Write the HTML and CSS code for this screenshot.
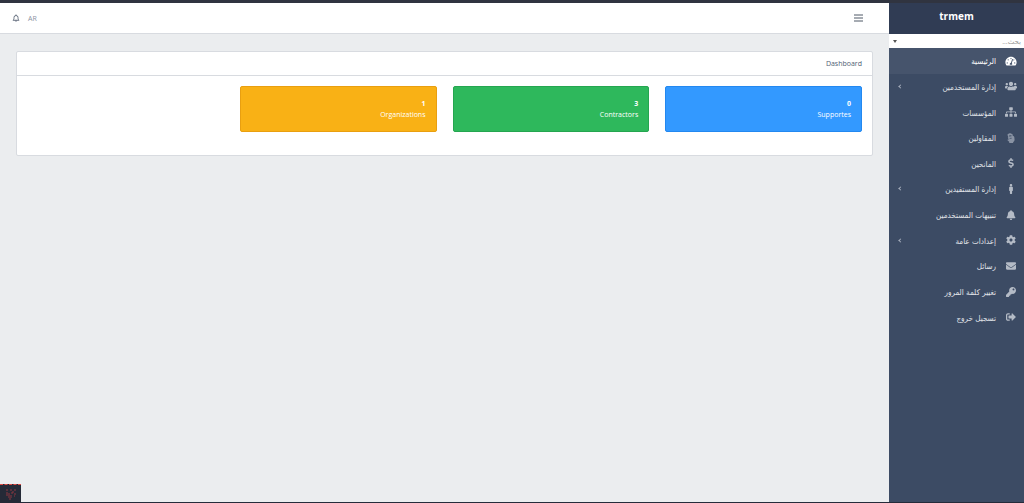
FILE: index.html
```html
<!DOCTYPE html>
<html lang="ar" dir="rtl">
<head>
<meta charset="utf-8">
<title>trmem</title>
<link rel="stylesheet" href="styles.css">
</head>
<body>
<div class="shell">
  <aside class="sidebar">
    <div class="brand">trmem</div>
    <div class="search">
      <select class="search-select" aria-label="بحث"><option>بحث...</option></select>
    </div>
    <nav class="menu">
      <a class="item active" href="#"><svg class="icon" viewBox="0 0 576 512"><path fill-rule="evenodd" d="M288 32C129 32 0 161 0 320c0 53 14 102 39 145 6 10 16 15 27 15h444c11 0 21-5 27-15 25-43 39-92 39-145C576 161 447 32 288 32zm0 64c18 0 32 14 32 32s-14 32-32 32-32-14-32-32 14-32 32-32zM96 384c-18 0-32-14-32-32s14-32 32-32 32 14 32 32-14 32-32 32zm48-160c-18 0-32-14-32-32s14-32 32-32 32 14 32 32-14 32-32 32zm247-44l-61 184c22 18 29 44 15 84H231c-14-41-6-75 30-94 8-4 16-6 24-6l61-184c9-25 54-10 45 16zm41 44c-10 0-19-5-25-12l16-47c3-1 6-5 9-5 18 0 32 14 32 32s-14 32-32 32zm48 160c-18 0-32-14-32-32s14-32 32-32 32 14 32 32-14 32-32 32z"/></svg><span class="label">الرئيسية</span></a>
      <a class="item" href="#"><svg class="icon" viewBox="0 0 640 512"><path d="M96 224c35 0 64-29 64-64s-29-64-64-64-64 29-64 64 29 64 64 64zm448 0c35 0 64-29 64-64s-29-64-64-64-64 29-64 64 29 64 64 64zm32 32h-64c-18 0-34 7-45 19 40 22 69 62 75 109h66c18 0 32-14 32-32v-32c0-35-29-64-64-64zm-256 0c62 0 112-50 112-112S382 32 320 32 208 82 208 144s50 112 112 112zm77 32h-8c-42 20-92 21-138 0h-8c-64 0-115 51-115 115v29c0 27 21 48 48 48h352c27 0 48-21 48-48v-29c0-64-51-115-115-115h-64zm-224-13c-11-12-27-19-45-19H64c-35 0-64 29-64 64v32c0 18 14 32 32 32h66c6-47 35-87 75-109z"/></svg><span class="label">إدارة المستخدمين</span><span class="chevron"></span></a>
      <a class="item" href="#"><svg class="icon" viewBox="0 0 640 512"><path d="M128 352H32c-18 0-32 14-32 32v96c0 18 14 32 32 32h96c18 0 32-14 32-32v-96c0-18-14-32-32-32zm-24-80h192v48h48v-48h192v48h48v-57c0-22-17-39-39-39H344v-64h40c18 0 32-14 32-32V32c0-18-14-32-32-32H256c-18 0-32 14-32 32v96c0 18 14 32 32 32h40v64H95c-22 0-39 17-39 39v57h48v-48zm264 80h-96c-18 0-32 14-32 32v96c0 18 14 32 32 32h96c18 0 32-14 32-32v-96c0-18-14-32-32-32zm240 0h-96c-18 0-32 14-32 32v96c0 18 14 32 32 32h96c18 0 32-14 32-32v-96c0-18-14-32-32-32z"/></svg><span class="label">المؤسسات</span></a>
      <a class="item dim" href="#"><svg class="icon" viewBox="40 0 400 512"><path d="M70 65c0-20 20-35 40-30l20 5c5-35 50-40 65-10 20-20 60-15 65 15 25-10 55 5 60 35l10 60c45 5 75 35 80 80l12 110c5 50-15 95-55 120l-15 12v22c0 15-12 28-28 28H175c-15 0-28-13-28-28v-30l-75-65c-30-30 5-80 45-55l30 20-8-25c-40 0-60-45-33-75-35-15-40-65-5-85-30-20-45-65-31-104zm85 45c-20 0-20 28 0 30l95 8c20 0 20-28 0-30zm5 70c-20 0-20 28 0 30l95 8c20 0 20-28 0-30zm15 70c-20 0-20 28 0 30l80 8c20 0 20-28 0-30z"/></svg><span class="label">المقاولين</span></a>
      <a class="item" href="#"><svg class="icon" viewBox="0 0 288 512"><path d="M209 233l-109-31c-12-4-21-16-21-29 0-16 13-29 29-29h67c13 0 25 4 35 10 6 4 14 4 20-1l35-34c7-7 6-19-2-25-25-19-55-30-87-30V16c0-9-7-16-16-16h-32c-9 0-16 7-16 16v48h-2C46 64-5 116 1 181c4 46 39 83 83 96l104 30c12 4 21 16 21 29 0 16-13 29-29 29h-67c-13 0-25-4-35-10-6-4-14-4-20 1l-35 34c-7 7-6 19 2 25 25 19 55 30 87 30v51c0 9 7 16 16 16h32c9 0 16-7 16-16v-51c47-1 90-29 106-73 22-62-15-120-73-139z"/></svg><span class="label">المانحين</span></a>
      <a class="item" href="#"><svg class="icon" viewBox="0 0 192 512"><path d="M96 0c35 0 64 29 64 64s-29 64-64 64-64-29-64-64S61 0 96 0m48 144h-11c-24 11-51 11-74 0H48c-27 0-48 21-48 48v136c0 13 11 24 24 24h16v136c0 13 11 24 24 24h64c13 0 24-11 24-24V352h16c13 0 24-11 24-24V192c0-27-21-48-48-48z"/></svg><span class="label">إدارة المستفيدين</span><span class="chevron"></span></a>
      <a class="item" href="#"><svg class="icon" viewBox="0 0 448 512"><path d="M224 512c35 0 64-29 64-64H160c0 35 29 64 64 64zm215-150c-19-20-55-52-55-154 0-78-54-140-128-155V32c0-18-14-32-32-32s-32 14-32 32v21C118 68 64 130 64 208c0 102-36 134-55 154-6 6-9 14-9 22 0 16 13 32 32 32h384c19 0 32-16 32-32 0-8-3-16-9-22z"/></svg><span class="label">تنبيهات المستخدمين</span></a>
      <a class="item" href="#"><svg class="icon" viewBox="0 0 512 512"><path fill-rule="evenodd" d="M487 316l-42-25c4-23 4-47 0-70l42-25c5-3 7-9 6-14-11-36-30-68-55-95-4-4-10-5-15-2l-42 24c-18-15-39-27-61-35V25c0-6-4-11-10-12-36-8-74-8-109 0-6 1-10 6-10 12v49c-22 8-43 20-61 35L88 85c-5-3-11-2-15 2-25 27-44 59-55 95-2 5 1 11 6 14l42 25c-4 23-4 47 0 70l-42 25c-5 3-7 9-6 14 11 36 30 68 55 95 4 4 10 5 15 2l42-24c18 15 39 27 61 35v49c0 6 4 11 10 12 36 8 74 8 109 0 6-1 10-6 10-12v-49c22-8 43-20 61-35l42 24c5 3 11 2 15-2 25-27 44-59 55-95 1-5-1-11-6-14zm-231 20c-44 0-80-36-80-80s36-80 80-80 80 36 80 80-36 80-80 80z"/></svg><span class="label">إعدادات عامة</span><span class="chevron"></span></a>
      <a class="item" href="#"><svg class="icon" viewBox="0 0 512 512"><path d="M502 191c4-3 10 0 10 5v204c0 26-22 48-48 48H48c-26 0-48-22-48-48V196c0-5 6-8 10-5 22 17 52 40 154 114 21 15 57 48 92 47 35 1 72-32 92-47 102-74 132-97 154-114zM256 320c23 0 57-29 73-41 133-96 143-104 173-128 6-5 10-12 10-19v-20c0-26-22-48-48-48H48c-26 0-48 22-48 48v20c0 7 4 14 10 19 30 24 40 32 173 128 16 12 50 41 73 41z"/></svg><span class="label">رسائل</span></a>
      <a class="item" href="#"><svg class="icon" viewBox="0 0 512 512"><path fill-rule="evenodd" d="M512 176c0 97-79 176-176 176-11 0-22-1-33-3l-24 27c-5 5-11 8-18 8h-37v40c0 13-11 24-24 24h-40v40c0 13-11 24-24 24H24c-13 0-24-11-24-24v-78c0-6 3-12 7-17l162-162c-6-17-9-36-9-55C160 79 239 0 336 0c97 0 176 79 176 176zM336 128c0 27 21 48 48 48s48-21 48-48-21-48-48-48-48 21-48 48z"/></svg><span class="label">تغيير كلمة المرور</span></a>
      <a class="item" href="#"><svg class="icon" viewBox="0 0 512 512"><path d="M497 273L329 441c-15 15-41 4-41-17v-96H152c-13 0-24-11-24-24v-96c0-13 11-24 24-24h136V88c0-21 26-32 41-17l168 168c9 9 9 25 0 34zM192 436v-40c0-7-5-12-12-12H96c-18 0-32-14-32-32V160c0-18 14-32 32-32h84c7 0 12-5 12-12V76c0-7-5-12-12-12H96c-53 0-96 43-96 96v192c0 53 43 96 96 96h84c7 0 12-5 12-12z"/></svg><span class="label">تسجيل خروج</span></a>
    </nav>
  </aside>
  <div class="page">
    <header class="topbar">
      <button class="toggler" type="button" aria-label="القائمة"><svg class="bars" viewBox="0 0 9 8"><path d="M0 1h9M0 4h9M0 7h9"/></svg></button>
      <div class="tools">
        <a class="lang" href="#">AR</a>
        <button class="alerts" type="button" aria-label="التنبيهات"><svg class="bell" viewBox="0 0 16 16"><path d="M8 1v2M2 12.500c2-2 2-3.500 2-5.500a4 4 0 0 1 8 0c0 2 0 3.500 2 5.500zM6.500 13a1.500 1.500 0 0 0 3 0"/></svg></button>
      </div>
    </header>
    <main class="content">
      <section class="card">
        <h1 class="card-title">Dashboard</h1>
        <div class="stats">
          <div class="stat blue"><strong>0</strong><span>Supportes</span></div>
          <div class="stat green"><strong>3</strong><span>Contractors</span></div>
          <div class="stat amber"><strong>1</strong><span>Organizations</span></div>
        </div>
      </section>
    </main>
  </div>
</div>
<button class="debug" type="button" aria-label="Debug"><svg class="debug-icon" viewBox="0 0 12 12"><path d="M1 2h2M2 4v2M1 7h2M4 5v5M5 2h2M6 5h2M6 7v3M8 3v2M10 1v2M9 6h2M9 8h1M4 11h2"/></svg></button>
</body>
</html>
```
FILE: styles.css
```css
* { box-sizing: border-box; }
body {
  margin: 0;
  font-family: "Open Sans", "DejaVu Sans", sans-serif;
  font-size: 7px;
  color: #4f5d73;
  background: #ebedef;
}
a { color: inherit; text-decoration: none; }
button { padding: 0; border: 0; background: none; color: inherit; font: inherit; }
.shell {
  display: flex;
  min-height: 100vh;
  border-top: 3px solid #303440;
  border-bottom: 1px solid #252b3a;
}
.sidebar {
  display: flex;
  flex-direction: column;
  flex: none;
  width: 135px;
  background: #3c4b64;
  color: #e2e5ea;
}
.brand {
  height: 31px;
  line-height: 27px;
  background: #303c54;
  color: #fff;
  font-size: 10px;
  font-weight: 700;
  text-align: center;
}
.search { position: relative; display: flex; height: 14px; }
.search::after {
  content: "";
  position: absolute;
  left: 4px;
  top: 6px;
  border: 2px solid transparent;
  border-top: 3px solid #555;
  border-bottom: 0;
}
.search-select {
  appearance: none;
  width: 100%;
  padding: 0 3px;
  border: 0;
  border-radius: 0;
  background: #fff;
  color: #999;
  font: inherit;
}
.menu { display: grid; grid-auto-rows: 1fr; height: 282px; }
.item { display: flex; align-items: center; padding: 0 7px; }
.item.active { background: #46546c; color: #fff; }
.icon { width: 12px; height: 10px; fill: #b4bbc6; }
.active .icon { fill: #fff; }
.dim .icon { fill: #8993a4; }
.label {
  margin-right: 9px;
  padding-top: 2px;
  font-family: "DejaVu Sans Condensed", "DejaVu Sans", sans-serif;
  font-size: 8px;
  white-space: nowrap;
}
.chevron {
  width: 3px;
  height: 3px;
  margin-right: auto;
  margin-left: 3px;
  border-left: 1px solid #a8b0be;
  border-bottom: 1px solid #a8b0be;
  transform: rotate(45deg);
}
.page { flex: 1; min-width: 0; }
.topbar {
  display: flex;
  align-items: center;
  justify-content: space-between;
  height: 31px;
  padding: 0 26px 0 12px;
  border-bottom: 1px solid #d8dbe0;
  background: #fff;
}
.toggler, .alerts { display: flex; }
.bars { width: 9px; height: 8px; stroke: #4f5966; }
.tools { display: flex; align-items: center; gap: 8px; color: #8a93a2; }
.bell { width: 8px; height: 8px; fill: none; stroke: #687281; stroke-width: 2; }
.content { padding: 17px 16px; }
.card {
  min-height: 105px;
  border: 1px solid #d8dbe0;
  border-radius: 2px;
  background: #fff;
}
.card-title {
  margin: 0;
  padding: 0 10px;
  border-bottom: 1px solid #d8dbe0;
  font-size: 7px;
  font-weight: 400;
  line-height: 23px;
}
.stats {
  display: grid;
  grid-template-columns: repeat(4, 1fr);
  gap: 16px;
  padding: 10px;
}
.stat {
  display: flex;
  flex-direction: column;
  height: 46px;
  padding: 11px 10px;
  border: 1px solid;
  border-radius: 2px;
  color: #fff;
  line-height: 11px;
}
.stat strong { font-weight: 700; }
.blue { background: #39f; border-color: #2388f0; }
.green { background: #2eb85c; border-color: #25a650; }
.amber { background: #f9b115; border-color: #e99f10; }
.debug {
  position: fixed;
  left: 0;
  bottom: 0;
  display: flex;
  align-items: center;
  justify-content: center;
  width: 21px;
  height: 19px;
  border-top: 1px dashed #e04a42;
  background: #252a37;
}
.debug-icon { width: 12px; height: 12px; stroke: #a83a43; opacity: .8; }
```
